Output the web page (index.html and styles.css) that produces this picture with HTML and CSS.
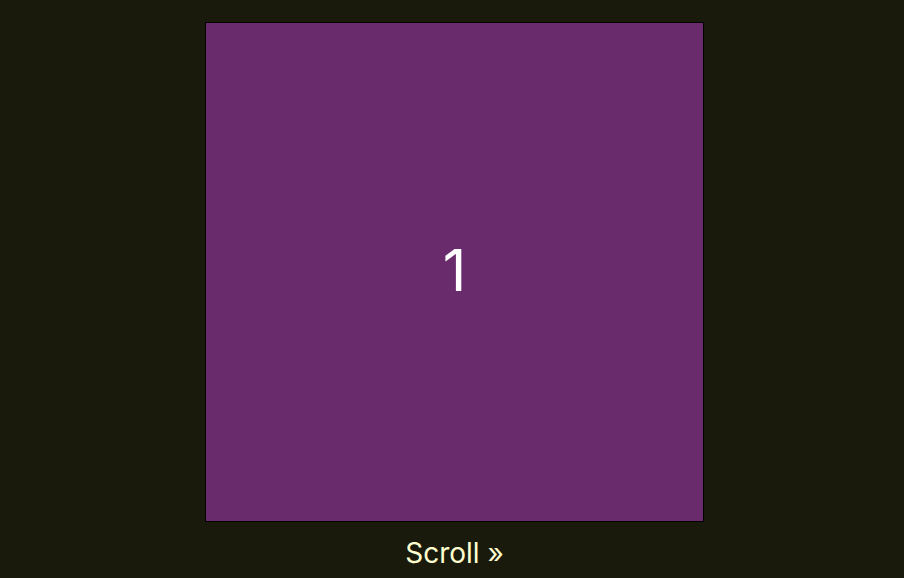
FILE: index.html
```html
<!DOCTYPE html>
<html>
<head>
<meta charset="utf-8">
<link rel="stylesheet" href="styles.css">
</head>
<body>
<main class="stage">
  <div class="slide"><span class="num">1</span></div>
  <div class="scroll">Scroll »</div>
</main>
</body>
</html>
```
FILE: styles.css
```css
html, body {
  margin: 0;
  padding: 0;
  background: #1a1a0c;
  height: 100%;
}
.stage {
  display: flex;
  flex-direction: column;
  align-items: center;
  padding-top: 22px;
  padding-left: 5px;
  font-family: Inter, "Liberation Sans", sans-serif;
}
.slide {
  box-sizing: border-box;
  width: 499px;
  height: 500px;
  border: 1px solid #000;
  background: #6a2b6c;
  display: flex;
  align-items: center;
  justify-content: center;
}
.num {
  color: #ffffff;
  font-size: 58px;
  margin-top: -4px;
}
.scroll {
  margin-top: 12px;
  color: #ffffd0;
  font-size: 28px;
  line-height: 38px;
}
```
